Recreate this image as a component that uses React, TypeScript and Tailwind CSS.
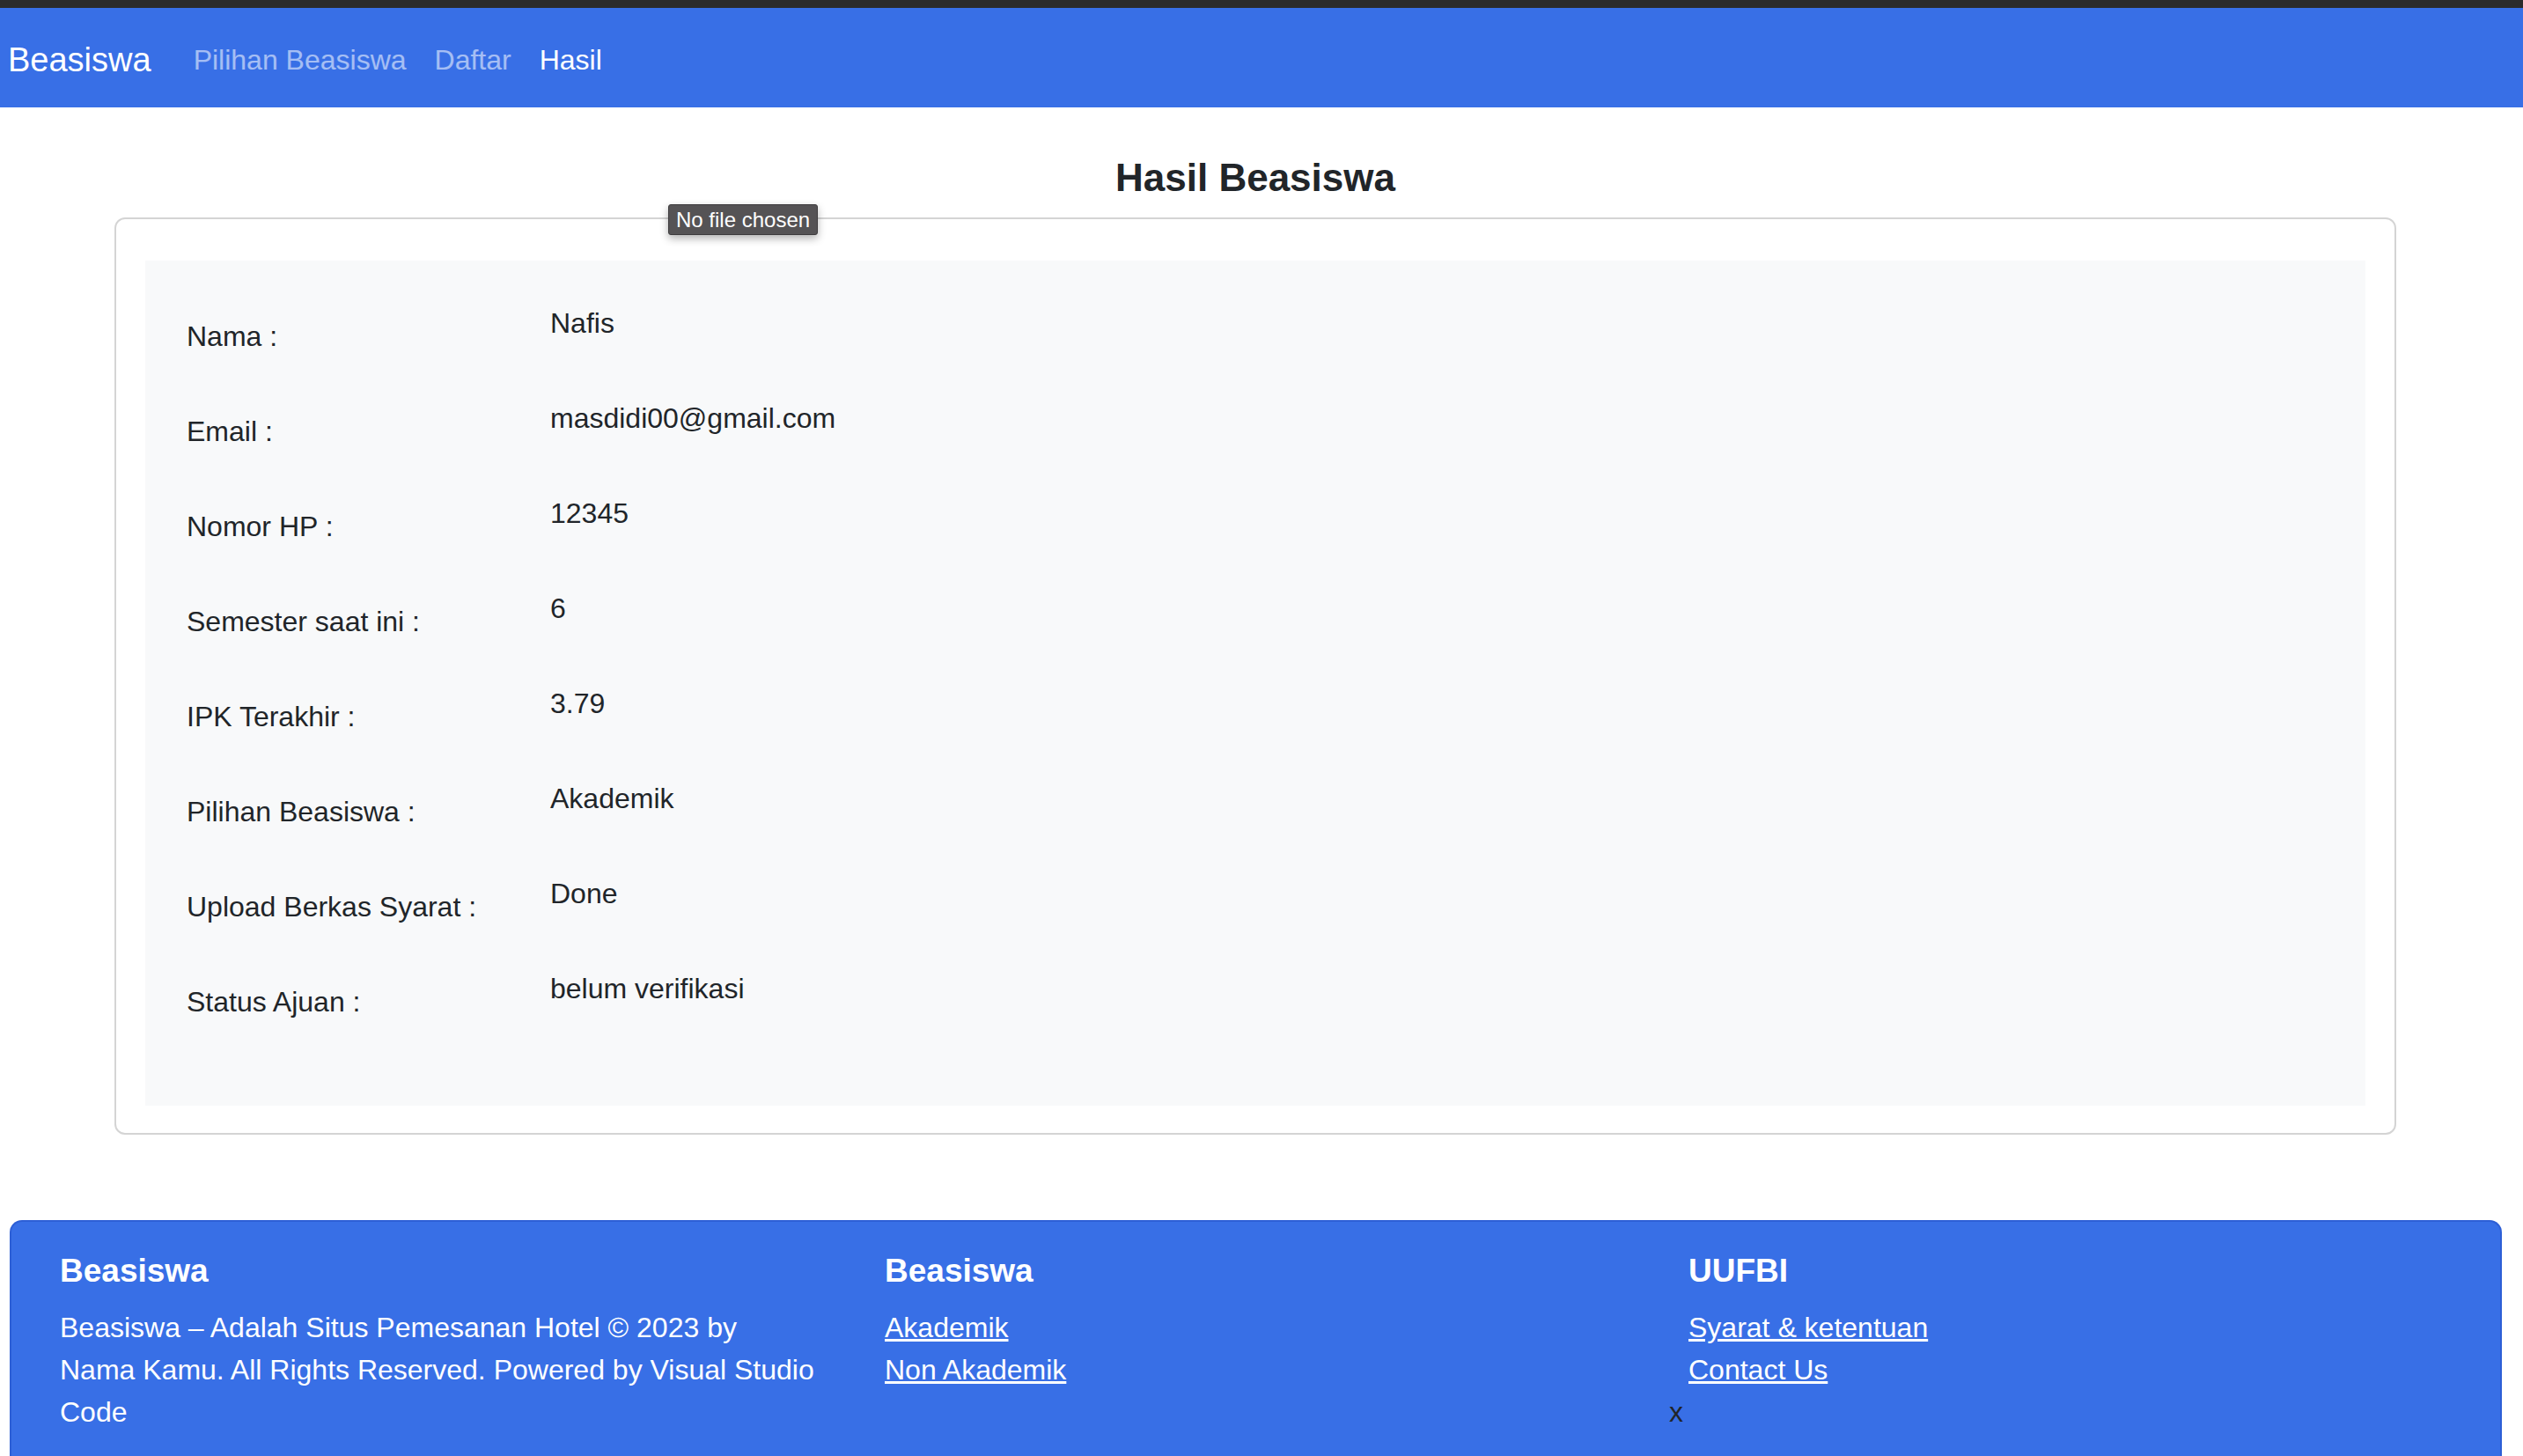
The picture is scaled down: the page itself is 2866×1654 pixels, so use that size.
const rows: [string, string][] = [
  ["Nama :", "Nafis"],
  ["Email :", "masdidi00@gmail.com"],
  ["Nomor HP :", "12345"],
  ["Semester saat ini :", "6"],
  ["IPK Terakhir :", "3.79"],
  ["Pilihan Beasiswa :", "Akademik"],
  ["Upload Berkas Syarat :", "Done"],
  ["Status Ajuan :", "belum verifikasi"],
];

function Navbar() {
  return (
    <nav className="flex h-[113px] items-center bg-[#386fe6] pl-[9px] pt-[4px]">
      <span className="mr-[32px] text-[38px] leading-[48px] text-white">Beasiswa</span>
      <a className="px-[16px] text-[32px] leading-[48px] text-white/55">Pilihan Beasiswa</a>
      <a className="px-[16px] text-[32px] leading-[48px] text-white/55">Daftar</a>
      <a className="px-[16px] text-[32px] leading-[48px] text-white">Hasil</a>
    </nav>
  );
}

function Footer() {
  return (
    <footer className="ml-[11px] mr-[24px] mt-[97px] rounded-t-[14px] border-x-2 border-t-2 border-[#2d5fd6] bg-[#386fe6] pb-[26px] pl-[55px] pt-[34px] text-white">
      <div className="flex">
        <div className="w-[937px] pr-[37px]">
          <h5 className="mb-[18px] text-[37px] font-bold leading-[44px]">Beasiswa</h5>
          <p className="text-[32px] leading-[48px]">
            Beasiswa – Adalah Situs Pemesanan Hotel © 2023 by
            <br />
            Nama Kamu. All Rights Reserved. Powered by Visual Studio
            <br />
            Code
          </p>
        </div>
        <div className="w-[913px]">
          <h5 className="mb-[18px] text-[37px] font-bold leading-[44px]">Beasiswa</h5>
          <ul className="text-[32px] leading-[48px]">
            <li><a className="underline">Akademik</a></li>
            <li><a className="underline">Non Akademik</a></li>
          </ul>
        </div>
        <div className="flex-1">
          <h5 className="mb-[18px] text-[37px] font-bold leading-[44px]">UUFBI</h5>
          <ul className="text-[32px] leading-[48px]">
            <li><a className="underline">Syarat &amp; ketentuan</a></li>
            <li><a className="underline">Contact Us</a></li>
          </ul>
          <p className="-ml-[22px] text-[32px] leading-[48px] text-[#212529]">x</p>
        </div>
      </div>
    </footer>
  );
}

export default function App() {
  return (
    <div className="min-h-screen bg-white font-['Liberation_Sans',Arial,sans-serif] text-[#212529]">
      <div className="h-[9px] bg-[#2b2b2b]" />
      <Navbar />
      <main className="pr-[14px]">
        <h1 className="mt-[53px] text-center text-[44px] font-bold leading-[53px]">Hasil Beasiswa</h1>
        <div className="relative ml-[130px] mr-[130px] mt-[19px] rounded-[12px] border-2 border-[#d4d4d4] px-[33px] pb-[31px] pt-[47px]">
          <div className="absolute left-[627px] top-[-17px] flex h-[35px] items-center rounded-[3px] border border-[#3e3c3e] bg-[#555355] px-[8px] text-[24px] text-white shadow-[0_4px_10px_rgba(0,0,0,0.3)]">
            No file chosen
          </div>
          <div className="bg-[#f8f9fa] pb-[49px] pl-[47px] pt-[47px]">
            {rows.map(([label, value]) => (
              <div key={label} className="flex h-[108px] items-start text-[32px] leading-[48px]">
                <div className="w-[413px] pt-[15px]">{label}</div>
                <div>{value}</div>
              </div>
            ))}
          </div>
        </div>
      </main>
      <Footer />
    </div>
  );
}
